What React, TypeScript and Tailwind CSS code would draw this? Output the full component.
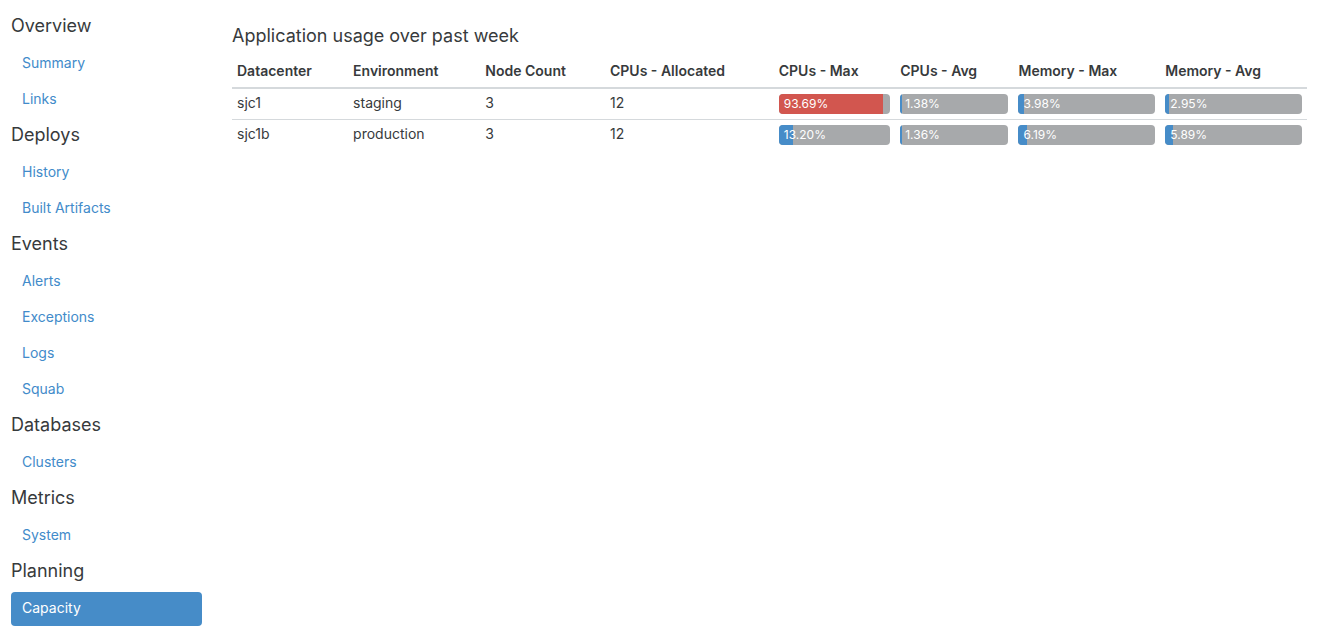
type NavGroup = { title: string; items: string[] };

const NAV: NavGroup[] = [
  { title: 'Overview', items: ['Summary', 'Links'] },
  { title: 'Deploys', items: ['History', 'Built Artifacts'] },
  { title: 'Events', items: ['Alerts', 'Exceptions', 'Logs', 'Squab'] },
  { title: 'Databases', items: ['Clusters'] },
  { title: 'Metrics', items: ['System'] },
  { title: 'Planning', items: ['Capacity'] },
];

const ACTIVE = 'Capacity';

const COLUMNS = [
  { label: 'Datacenter', width: 'w-[10.8%]' },
  { label: 'Environment', width: 'w-[12.3%]' },
  { label: 'Node Count', width: 'w-[11.6%]' },
  { label: 'CPUs - Allocated', width: 'w-[15.7%]' },
  { label: 'CPUs - Max', width: 'w-[11.3%]' },
  { label: 'CPUs - Avg', width: 'w-[11%]' },
  { label: 'Memory - Max', width: 'w-[13.65%]' },
  { label: 'Memory - Avg', width: 'w-[13.65%]' },
];

const ROWS = [
  { datacenter: 'sjc1', environment: 'staging', nodes: 3, cpus: 12, usage: [93.69, 1.38, 3.98, 2.95] },
  { datacenter: 'sjc1b', environment: 'production', nodes: 3, cpus: 12, usage: [13.2, 1.36, 6.19, 5.89] },
];

function UsageBar({ value, label }: { value: number; label: string }) {
  return (
    <div
      role="progressbar"
      aria-label={label}
      aria-valuenow={value}
      aria-valuemin={0}
      aria-valuemax={100}
      className="relative h-5 overflow-hidden rounded-[4px] bg-[#a7a9ab]"
    >
      <div
        className={value > 90 ? 'absolute inset-y-0 left-0 bg-[#d2564f]' : 'absolute inset-y-0 left-0 bg-[#468cc8]'}
        style={{ width: `${value}%` }}
      />
      <span className="relative block pl-[5px] text-xs leading-5 text-white">{value.toFixed(2)}%</span>
    </div>
  );
}

export default function App() {
  return (
    <div className="flex gap-[30px] bg-white pt-[10px] pr-3 pb-[5px] pl-[11px] font-['Inter',sans-serif] text-sm text-[#373a3c]">
      <nav aria-label="Main" className="w-[191px] shrink-0">
        {NAV.map((group) => (
          <section key={group.title}>
            <h2 className="mb-[5px] text-lg leading-8">{group.title}</h2>
            <ul>
              {group.items.map((item) => (
                <li key={item} className="mb-0.5">
                  <a
                    href="#"
                    aria-current={item === ACTIVE ? 'page' : undefined}
                    className={
                      item === ACTIVE
                        ? 'block rounded-[4px] bg-[#468cc8] px-[11px] pb-0.5 leading-8 text-white'
                        : 'block rounded-[4px] px-[11px] pb-0.5 leading-8 text-[#428bca]'
                    }
                  >
                    {item}
                  </a>
                </li>
              ))}
            </ul>
          </section>
        ))}
      </nav>
      <main className="min-w-0 flex-1 pt-3">
        <h1 className="mb-2 text-lg leading-7">Application usage over past week</h1>
        <table className="w-full table-fixed border-collapse text-left">
          <thead>
            <tr className="border-b-2 border-[#d5d9dc]">
              {COLUMNS.map((col) => (
                <th key={col.label} scope="col" className={`${col.width} px-[5px] pt-[3px] pb-[6px] leading-5 font-semibold whitespace-nowrap`}>
                  {col.label}
                </th>
              ))}
            </tr>
          </thead>
          <tbody>
            {ROWS.map((row) => (
              <tr key={row.datacenter} className="border-b border-[#d5d9dc] align-top last:border-b-0">
                <td className="px-[5px] py-1 leading-5">{row.datacenter}</td>
                <td className="px-[5px] py-1 leading-5">{row.environment}</td>
                <td className="px-[5px] py-1 leading-5">{row.nodes}</td>
                <td className="px-[5px] py-1 leading-5">{row.cpus}</td>
                {row.usage.map((value, i) => (
                  <td key={COLUMNS[i + 4].label} className="p-[5px]">
                    <UsageBar value={value} label={`${row.datacenter} ${COLUMNS[i + 4].label}`} />
                  </td>
                ))}
              </tr>
            ))}
          </tbody>
        </table>
      </main>
    </div>
  );
}
